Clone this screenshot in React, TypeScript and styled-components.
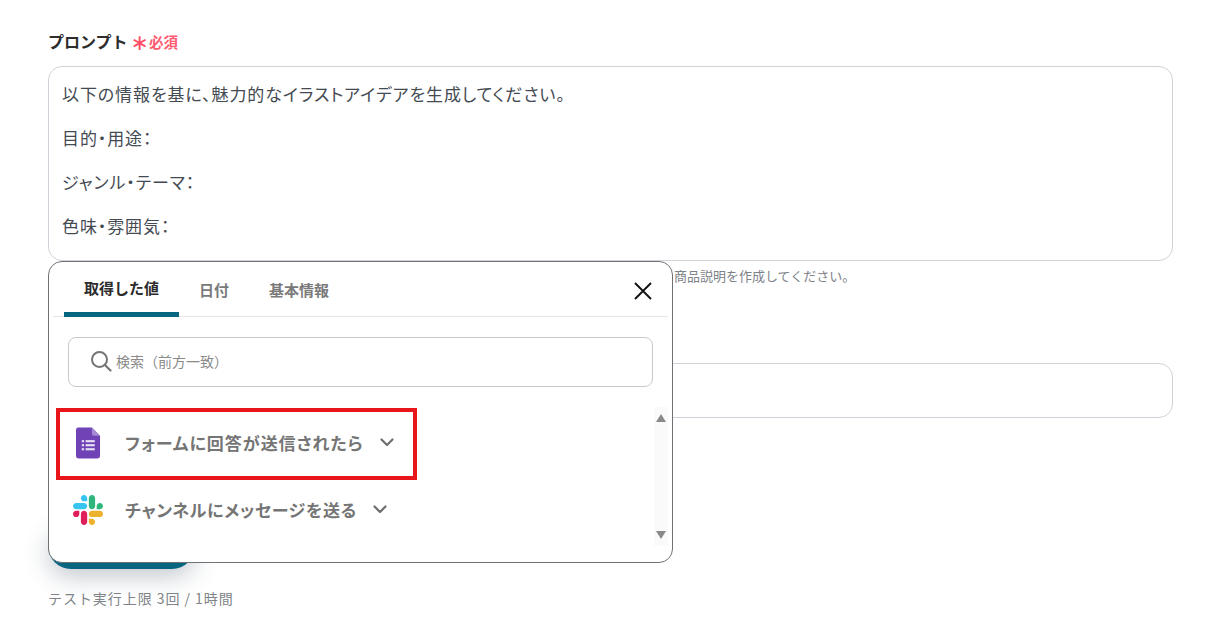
import React from "react";
import styled, { createGlobalStyle } from "styled-components";

const Global = createGlobalStyle`
  html, body { margin: 0; padding: 0; background: #fff; }
  body { font-family: "Noto Sans CJK JP", "Noto Sans", sans-serif; overflow: hidden; }
  * { box-sizing: border-box; }
`;

const Page = styled.div`
  position: relative;
  width: 1222px;
  height: 634px;
  padding: 30px 49px 0 48px;
  overflow: hidden;
`;

const LabelRow = styled.div`
  display: flex;
  align-items: center;
  height: 22px;
  gap: 3px;
  margin-bottom: 14px;
`;

const LabelText = styled.span`
  font-size: 16px;
  font-weight: 700;
  color: #2d2d2d;
`;

const Star = styled.span`
  color: #ff4d67;
  font-size: 22px;
  line-height: 22px;
  font-family: "DejaVu Sans", sans-serif;
  margin: 4px -3px 0 0;
`;

const Required = styled.span`
  font-size: 14.5px;
  font-weight: 700;
  color: #ff5a70;
`;

const PromptBox = styled.div`
  height: 195px;
  border: 1px solid #cfd3d9;
  border-radius: 14px;
  padding: 13px 13px;
  display: flex;
  flex-direction: column;
  gap: 16px;
`;

const PromptLine = styled.div`
  font-size: 17px;
  line-height: 28px;
  letter-spacing: 0.9px;
  color: #444a52;
  font-feature-settings: "palt";
`;

const Hint = styled.div`
  font-size: 13px;
  line-height: 18px;
  color: #7d8288;
  margin-top: 6px;
  padding-left: 626px;
`;

const TextInput = styled.div`
  height: 55px;
  border: 1px solid #cfd3d9;
  border-radius: 14px;
  margin-top: 78px;
`;

const TestButton = styled.div`
  width: 147px;
  height: 46px;
  border-radius: 23px;
  background: #06667f;
  margin-top: 105px;
  box-shadow: 0 8px 24px rgba(60, 80, 100, 0.3);
`;

const Note = styled.div`
  font-size: 14px;
  line-height: 20px;
  letter-spacing: 0.95px;
  color: #808488;
  margin-top: 19px;
`;

const Popup = styled.div`
  position: absolute;
  left: 48px;
  top: 261px;
  width: 625px;
  height: 302px;
  background: #fff;
  border: 1px solid #6f7275;
  border-radius: 14px;
  display: flex;
  flex-direction: column;
`;

const TabBar = styled.div`
  position: relative;
  height: 55px;
  margin: 0 4px;
  padding-left: 11px;
  display: flex;
  border-bottom: 1px solid #e6e6e6;
`;

const Tab = styled.div<{ $active?: boolean }>`
  width: ${(p) => (p.$active ? "115px" : "auto")};
  padding: ${(p) => (p.$active ? "1px 0 0" : "0 20px 1px 20px")};
  height: 55px;
  display: flex;
  align-items: center;
  justify-content: center;
  font-size: 15px;
  font-weight: 700;
  color: ${(p) => (p.$active ? "#2b2b2b" : "#7a7a7a")};
  border-bottom: ${(p) => (p.$active ? "5px solid #06667f" : "none")};
  border-radius: 5px 5px 0 0;
`;

const CloseButton = styled.div`
  position: absolute;
  right: 13px;
  top: 17px;
  width: 24px;
  height: 24px;
  display: flex;
  align-items: center;
  justify-content: center;
`;

const SearchBox = styled.div`
  height: 50px;
  margin: 20px 19px 0 19px;
  border: 1px solid #c9c9c9;
  border-radius: 8px;
  padding: 0 0 2px 21px;
  display: flex;
  align-items: center;
  gap: 4px;
  font-size: 14px;
  color: #8a8a8a;
`;

const ListArea = styled.div`
  position: relative;
  flex: 1;
  padding: 22px 0 0 0;
`;

const Item = styled.div<{ $left: number; $gap: number; $spacing: number }>`
  display: flex;
  align-items: center;
  height: 67px;
  padding-left: ${(p) => p.$left}px;
  gap: ${(p) => p.$gap}px;
  font-size: 17px;
  font-weight: 700;
  letter-spacing: ${(p) => p.$spacing}px;
  color: #757575;
  font-feature-settings: "palt";
`;

const ChevronSlot = styled.span<{ $shift: number }>`
  display: flex;
  margin-left: ${(p) => p.$shift}px;
`;

const Scrollbar = styled.div`
  position: absolute;
  right: 4px;
  top: 20px;
  width: 14px;
  height: 139px;
  background: #fafafa;
  display: flex;
  flex-direction: column;
  justify-content: space-between;
  align-items: center;
  padding: 7px 0;
`;

const Arrow = styled.div<{ $down?: boolean }>`
  width: 0;
  height: 0;
  border-left: 5px solid transparent;
  border-right: 5px solid transparent;
  ${(p) => (p.$down ? "border-top: 8px solid #8a8a8a;" : "border-bottom: 8px solid #8a8a8a;")}
`;

const Highlight = styled.div`
  position: absolute;
  left: 56px;
  top: 408px;
  width: 361px;
  height: 72px;
  border: 4px solid #e8151b;
`;

const FormsIcon = () => (
  <svg width="25" height="32" viewBox="0 0 26 32">
    <path d="M2.5 0H16.5L25 8.5V29.5A2.5 2.5 0 0 1 22.5 32H2.5A2.5 2.5 0 0 1 0 29.5V2.5A2.5 2.5 0 0 1 2.5 0Z" fill="#6f42b5" />
    <path d="M16.5 0L25 8.5H18.5A2 2 0 0 1 16.5 6.5Z" fill="#a68ad3" />
    <g fill="#e8e0f5">
      <rect x="6" y="13" width="2.4" height="2.2" />
      <rect x="10" y="13" width="9.5" height="2.2" />
      <rect x="6" y="17.2" width="2.4" height="2.2" />
      <rect x="10" y="17.2" width="9.5" height="2.2" />
      <rect x="6" y="21.4" width="2.4" height="2.2" />
      <rect x="10" y="21.4" width="9.5" height="2.2" />
    </g>
  </svg>
);

const SlackIcon = () => (
  <svg width="30" height="30" viewBox="0 0 122.8 122.8">
    <path d="M25.8 77.6c0 7.1-5.8 12.9-12.9 12.9S0 84.7 0 77.6s5.8-12.9 12.9-12.9h12.9v12.9zm6.5 0c0-7.1 5.8-12.9 12.9-12.9s12.9 5.8 12.9 12.9v32.3c0 7.1-5.8 12.9-12.9 12.9s-12.9-5.8-12.9-12.9V77.6z" fill="#e01e5a" />
    <path d="M45.2 25.8c-7.1 0-12.9-5.8-12.9-12.9S38.1 0 45.2 0s12.9 5.8 12.9 12.9v12.9H45.2zm0 6.5c7.1 0 12.9 5.8 12.9 12.9s-5.8 12.9-12.9 12.9H12.9C5.8 58.1 0 52.3 0 45.2s5.8-12.9 12.9-12.9h32.3z" fill="#36c5f0" />
    <path d="M97 45.2c0-7.1 5.8-12.9 12.9-12.9s12.9 5.8 12.9 12.9-5.8 12.9-12.9 12.9H97V45.2zm-6.5 0c0 7.1-5.8 12.9-12.9 12.9s-12.9-5.8-12.9-12.9V12.9C64.7 5.8 70.5 0 77.6 0s12.9 5.8 12.9 12.9v32.3z" fill="#2eb67d" />
    <path d="M77.6 97c7.1 0 12.9 5.8 12.9 12.9s-5.8 12.9-12.9 12.9-12.9-5.8-12.9-12.9V97h12.9zm0-6.5c-7.1 0-12.9-5.8-12.9-12.9s5.8-12.9 12.9-12.9h32.3c7.1 0 12.9 5.8 12.9 12.9s-5.8 12.9-12.9 12.9H77.6z" fill="#ecb22e" />
  </svg>
);

const Chevron = () => (
  <svg width="14" height="9" viewBox="0 0 14 9" fill="none">
    <path d="M1.5 1.5L7 7L12.5 1.5" stroke="#6f6f6f" strokeWidth="2.2" strokeLinecap="round" strokeLinejoin="round" />
  </svg>
);

const SearchIcon = () => (
  <svg width="22" height="22" viewBox="0 0 22 22" fill="none">
    <circle cx="9.5" cy="9.5" r="7.5" stroke="#757575" strokeWidth="2" />
    <path d="M15 15L20.5 20.5" stroke="#757575" strokeWidth="2.2" strokeLinecap="round" />
  </svg>
);

const CloseIcon = () => (
  <svg width="18" height="18" viewBox="0 0 18 18" fill="none">
    <path d="M1 1L17 17M17 1L1 17" stroke="#111" strokeWidth="1.9" />
  </svg>
);

export default function App() {
  return (
    <Page>
      <Global />
      <LabelRow>
        <LabelText>プロンプト</LabelText>
        <Star>∗</Star>
        <Required>必須</Required>
      </LabelRow>
      <PromptBox>
        <PromptLine>以下の情報を基に、魅力的なイラストアイデアを生成してください。</PromptLine>
        <PromptLine>目的・用途：</PromptLine>
        <PromptLine>ジャンル・テーマ：</PromptLine>
        <PromptLine>色味・雰囲気：</PromptLine>
      </PromptBox>
      <Hint>商品説明を作成してください。</Hint>
      <TextInput />
      <TestButton />
      <Note>テスト実行上限 3回 / 1時間</Note>

      <Popup>
        <TabBar>
          <Tab $active>取得した値</Tab>
          <Tab>日付</Tab>
          <Tab>基本情報</Tab>
          <CloseButton>
            <CloseIcon />
          </CloseButton>
        </TabBar>
        <SearchBox>
          <SearchIcon />
          検索（前方一致）
        </SearchBox>
        <ListArea>
          <Item $left={27} $gap={24} $spacing={0.95}>
            <FormsIcon />
            フォームに回答が送信されたら
            <ChevronSlot $shift={-7}>
              <Chevron />
            </ChevronSlot>
          </Item>
          <Item $left={24} $gap={22} $spacing={0.65}>
            <SlackIcon />
            チャンネルにメッセージを送る
            <ChevronSlot $shift={-6}>
              <Chevron />
            </ChevronSlot>
          </Item>
          <Scrollbar>
            <Arrow />
            <Arrow $down />
          </Scrollbar>
        </ListArea>
      </Popup>
      <Highlight />
    </Page>
  );
}
